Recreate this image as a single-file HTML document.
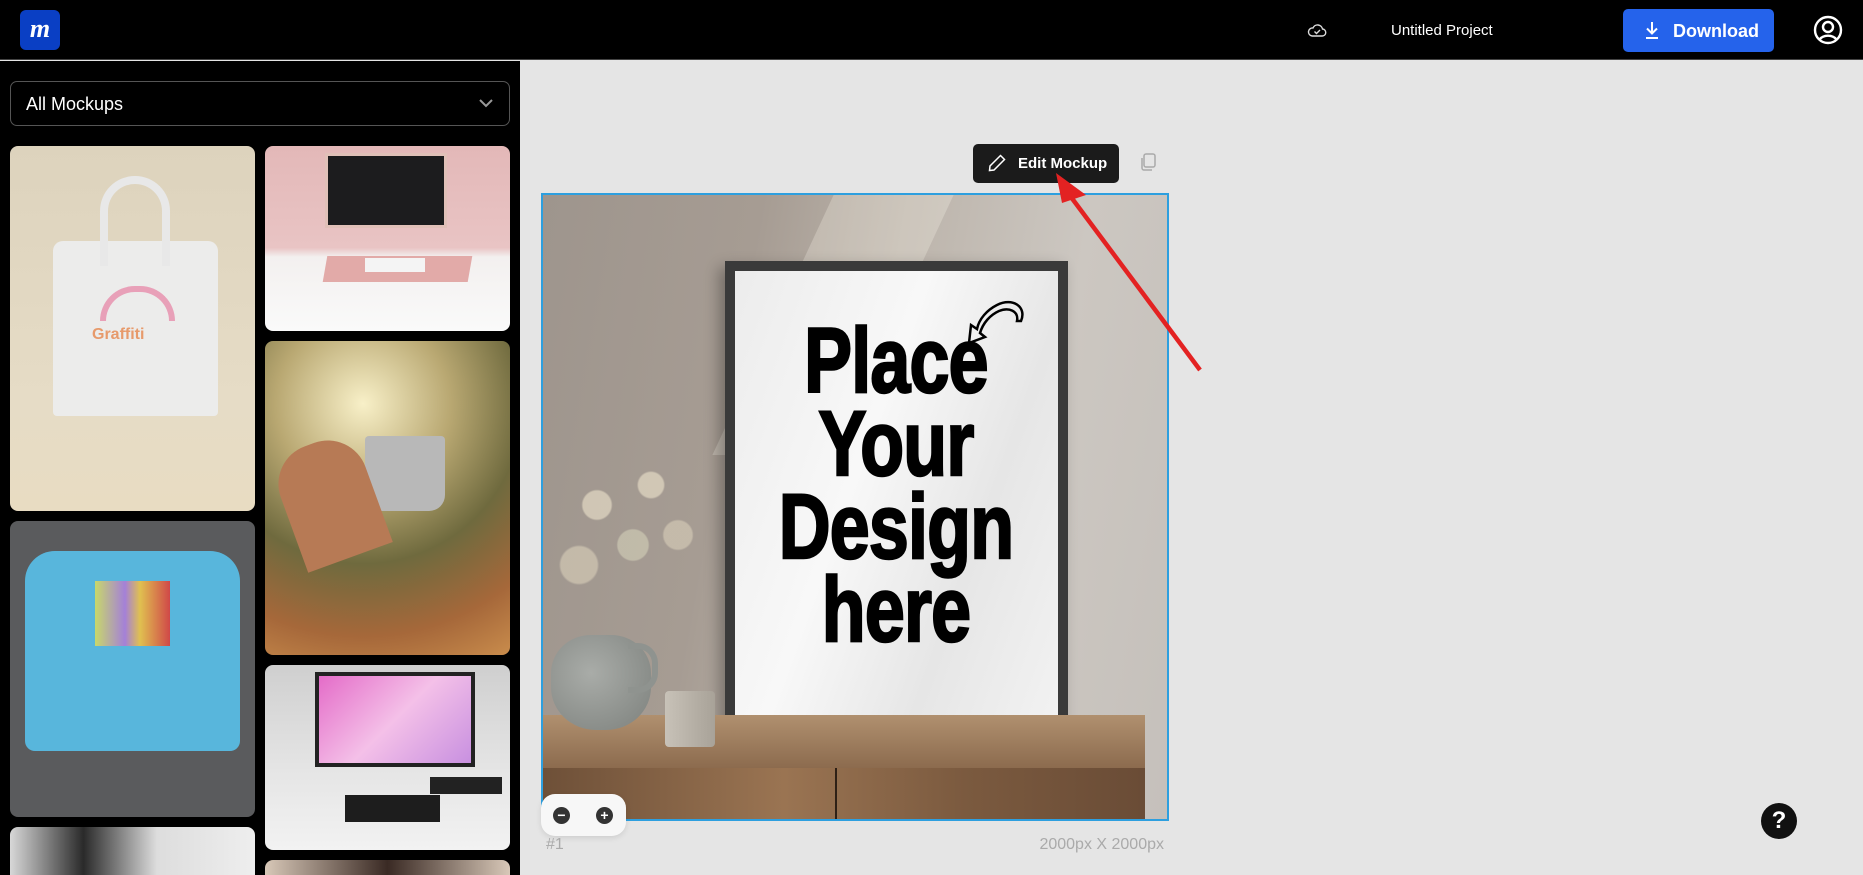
<!DOCTYPE html>
<html><head><meta charset="utf-8"><style>
*{margin:0;padding:0;box-sizing:border-box}
body{width:1863px;height:875px;overflow:hidden;background:#e5e5e5;font-family:"Liberation Sans",sans-serif;position:relative}
.hdr{position:absolute;left:0;top:0;width:1863px;height:60px;background:#000;border-bottom:1px solid #444}
.logo{position:absolute;left:20px;top:10px;width:40px;height:40px;border-radius:6px;background:#0a3fc4;color:#fff;font:italic bold 26px "Liberation Serif",serif;text-align:center;line-height:38px}
.side{position:absolute;left:0;top:61px;width:520px;height:814px;background:#000;overflow:hidden}
.sel{position:absolute;left:10px;top:20px;width:500px;height:45px;border:1px solid #555;border-radius:7px;color:#fff;font-size:18px;line-height:45px;padding-left:15px}
.tile{position:absolute;border-radius:8px;overflow:hidden}
.abs{position:absolute}
</style></head><body>
<div class="hdr">
 <div class="logo">m</div>
 <svg class="abs" style="left:1307px;top:22px" width="20" height="18" viewBox="0 0 20 18"><path d="M5 14h10a3.5 3.5 0 0 0 .5-7 5 5 0 0 0-9.5-1A4 4 0 0 0 5 14z" fill="none" stroke="#ddd" stroke-width="1.4"/><path d="M7.5 9.5l2 2 3.5-3.5" fill="none" stroke="#ddd" stroke-width="1.4"/></svg>
 <div class="abs" style="left:1391px;top:22px;color:#fff;font-size:15px">Untitled Project</div>
 <div class="abs" style="left:1623px;top:9px;width:151px;height:43px;background:#2563eb;border-radius:5px;color:#fff;font-size:18px;font-weight:bold;line-height:45px;padding-left:50px">Download</div>
 <svg class="abs" style="left:1643px;top:20px" width="18" height="20" viewBox="0 0 18 20"><path d="M9 2v11M4 8.5l5 5 5-5M3 18h12" fill="none" stroke="#fff" stroke-width="2"/></svg>
 <svg class="abs" style="left:1813px;top:15px" width="30" height="30" viewBox="0 0 30 30"><circle cx="15" cy="15" r="13" fill="none" stroke="#fff" stroke-width="2.4"/><circle cx="15" cy="12" r="5" fill="none" stroke="#fff" stroke-width="2.4"/><path d="M6.5 24.5a10 8 0 0 1 17 0" fill="none" stroke="#fff" stroke-width="2.4"/></svg>
</div>
<div class="side">
 <div class="sel">All Mockups<svg class="abs" style="right:16px;top:17px" width="14" height="9" viewBox="0 0 14 9"><path d="M1 1l6 6 6-6" fill="none" stroke="#999" stroke-width="2"/></svg></div>
 <div class="tile" style="left:10px;top:85px;width:245px;height:365px;background:linear-gradient(180deg,#ddd3bd,#e6dcc6 70%,#e8dcc2)">
  <div class="abs" style="left:43px;top:95px;width:165px;height:175px;background:#ececeb;border-radius:10px 10px 4px 4px"></div>
  <div class="abs" style="left:90px;top:30px;width:70px;height:90px;border:8px solid #e8e8e8;border-bottom:none;border-radius:35px 35px 0 0"></div>
  <div class="abs" style="left:90px;top:140px;width:75px;height:35px;border-radius:40px 40px 0 0;border:6px solid #e8a0b8;border-bottom:none"></div>
  <div class="abs" style="left:82px;top:180px;color:#e79a6b;font:bold 16px 'Liberation Sans'">Graffiti</div>
 </div>
 <div class="tile" style="left:10px;top:460px;width:245px;height:296px;background:#5a5b5d">
  <div class="abs" style="left:15px;top:30px;width:215px;height:200px;background:#58b6dc;border-radius:30px 30px 10px 10px"></div>
  <div class="abs" style="left:85px;top:60px;width:75px;height:65px;background:linear-gradient(90deg,#c8d86a,#a480d8 40%,#e0c050 60%,#d04848)"></div>
 </div>
 <div class="tile" style="left:10px;top:766px;width:245px;height:60px;background:linear-gradient(90deg,#d8d8d8,#2a2a2a 30%,#ddd 60%,#eee)"></div>
 <div class="tile" style="left:265px;top:85px;width:245px;height:185px;background:linear-gradient(180deg,#e3b8b8,#e9c4c4 55%,#f3f0ef 60%,#fafafa)">
  <div class="abs" style="left:60px;top:7px;width:122px;height:75px;background:#1c1c1e;border:3px solid #e0c0b8"></div>
  <div class="abs" style="left:60px;top:110px;width:145px;height:26px;background:#e2aaa8;transform:skewX(-10deg)"></div>
  <div class="abs" style="left:100px;top:112px;width:60px;height:14px;background:#f4f4f4"></div>
 </div>
 <div class="tile" style="left:265px;top:280px;width:245px;height:314px;background:radial-gradient(circle at 40% 20%,#f8f0c8,#b9a872 30%,#6f6a3e 55%,#a6683a 80%,#c98c4c)">
  <div class="abs" style="left:100px;top:95px;width:80px;height:75px;background:#b8b8b8;border-radius:4px 4px 16px 16px"></div>
  <div class="abs" style="left:20px;top:100px;width:90px;height:120px;background:#b77a55;border-radius:40px 40px 0 0;transform:rotate(-20deg)"></div>
 </div>
 <div class="tile" style="left:265px;top:604px;width:245px;height:185px;background:linear-gradient(180deg,#cfcfcf,#e6e6e6 60%,#f2f2f2)">
  <div class="abs" style="left:50px;top:7px;width:160px;height:95px;background:linear-gradient(135deg,#e46cc8,#f4c0e8 50%,#c890e0);border:4px solid #222"></div>
  <div class="abs" style="left:80px;top:130px;width:95px;height:27px;background:#1d1d1d"></div>
  <div class="abs" style="left:165px;top:112px;width:72px;height:17px;background:#222"></div>
 </div>
 <div class="tile" style="left:265px;top:799px;width:245px;height:40px;background:linear-gradient(90deg,#d8c8b8,#3a2a24 50%,#d8c8b8)"></div>
</div>

<div class="abs" style="left:973px;top:144px;width:146px;height:39px;background:#1b1b1b;border-radius:5px;color:#fff;font-size:15px;font-weight:bold;line-height:39px;padding-left:45px">Edit Mockup</div>
<svg class="abs" style="left:987px;top:153px" width="20" height="20" viewBox="0 0 20 20"><path d="M13.5 2.5l4 4L7 17l-4.5 .5L3 13z" fill="none" stroke="#fff" stroke-width="1.5"/></svg>
<svg class="abs" style="left:1139px;top:152px" width="18" height="20" viewBox="0 0 18 20"><rect x="5" y="2" width="11" height="13" rx="2" fill="none" stroke="#aaa" stroke-width="1.5"/><path d="M3 6v10a2 2 0 0 0 2 2h8" fill="none" stroke="#aaa" stroke-width="1.5"/></svg>

<div class="abs" style="left:541px;top:193px;width:628px;height:628px;border:2px solid #2d9fdf;overflow:hidden;background:linear-gradient(100deg,#9e958d 0%,#a69c93 30%,#bcb4ab 50%,#ccc7c1 75%,#c5c0bb 100%)">
 <div class="abs" style="left:230px;top:0;width:120px;height:260px;background:rgba(255,250,240,.25);transform:skewX(-25deg)"></div>
 <div class="abs" style="left:182px;top:66px;width:343px;height:468px;background:#3a3a3a;box-shadow:-6px 6px 14px rgba(0,0,0,.3)"></div>
 <div class="abs" style="left:192px;top:76px;width:323px;height:450px;background:linear-gradient(110deg,#ececec,#f8f8f8 40%,#e6e6e6 70%,#f2f2f2)"></div>
 <svg class="abs" style="left:408px;top:98px" width="80" height="60" viewBox="0 0 80 60"><path d="M70 28c6-14-8-24-24-16-10 5-18 14-20 24l-6-4-2 18 16-6-5-4c3-10 10-18 19-22 10-4 20 0 18 10z" fill="none" stroke="#000" stroke-width="2.5"/></svg>
 <div class="abs" style="left:103px;top:125px;width:500px;text-align:center;font:bold 92px/83px 'Liberation Sans',sans-serif;color:#000;-webkit-text-stroke:2.5px #000;transform:scaleX(.78);transform-origin:250px 0;letter-spacing:-1px">Place<br>Your<br>Design<br>here</div>
 <div class="abs" style="left:0;top:230px;width:180px;height:200px;background:radial-gradient(circle at 30% 40%,rgba(220,210,190,.8) 0 8%,transparent 9%),radial-gradient(circle at 60% 30%,rgba(220,210,190,.8) 0 7%,transparent 8%),radial-gradient(circle at 50% 60%,rgba(200,195,175,.8) 0 10%,transparent 11%),radial-gradient(circle at 20% 70%,rgba(210,200,180,.7) 0 9%,transparent 10%),radial-gradient(circle at 75% 55%,rgba(210,200,180,.7) 0 8%,transparent 9%)"></div>
 <div class="abs" style="left:0;top:520px;width:602px;height:53px;background:linear-gradient(180deg,#b0906f,#8c6b4e)"></div>
 <div class="abs" style="left:0;top:573px;width:602px;height:60px;background:linear-gradient(90deg,#6e5038,#9a7452 40%,#7b5a3f 70%,#6a4c36)"></div>
 <div class="abs" style="left:292px;top:573px;width:2px;height:60px;background:#2e2016"></div>
 <div class="abs" style="left:8px;top:440px;width:100px;height:95px;background:radial-gradient(ellipse at 40% 40%,#a9aca8,#7d817d);border-radius:40% 40% 45% 45%"></div>
 <div class="abs" style="left:85px;top:448px;width:30px;height:50px;border:6px solid #8f938f;border-left:none;border-radius:0 20px 20px 0"></div>
 <div class="abs" style="left:122px;top:496px;width:50px;height:56px;background:linear-gradient(90deg,#c8c2b8,#a8a298);border-radius:4px"></div>
</div>
<svg class="abs" style="left:1040px;top:165px" width="175" height="210" viewBox="0 0 175 210"><path d="M160 205L28 28" stroke="#e32222" stroke-width="4.5"/><path d="M16 8l30 22-24 8z" fill="#e32222"/></svg>

<div class="abs" style="left:541px;top:794px;width:85px;height:42px;background:#f7f7f7;border-radius:14px;box-shadow:0 2px 6px rgba(0,0,0,.1)"></div>
<div class="abs" style="left:553px;top:807px;width:17px;height:17px;border-radius:50%;background:#333;color:#fff;font:bold 14px/16px sans-serif;text-align:center">−</div>
<div class="abs" style="left:596px;top:807px;width:17px;height:17px;border-radius:50%;background:#333;color:#fff;font:bold 14px/17px sans-serif;text-align:center">+</div>
<div class="abs" style="left:546px;top:836px;color:#aaa;font-size:16px">#1</div>
<div class="abs" style="left:1000px;top:836px;width:164px;text-align:right;color:#aaa;font-size:16px">2000px X 2000px</div>
<div class="abs" style="left:1761px;top:803px;width:36px;height:36px;border-radius:50%;background:#111;color:#fff;font:bold 24px/36px sans-serif;text-align:center">?</div>
</body></html>
